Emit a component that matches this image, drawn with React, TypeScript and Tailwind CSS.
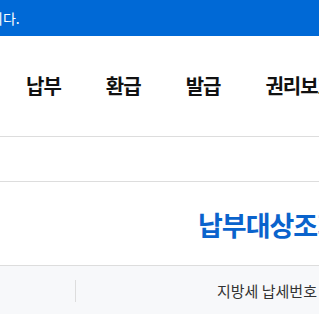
export default function App() {
  const menus = ["납부", "환급", "발급", "권리보호"];

  return (
    <div
      className="w-[319px] h-[314px] overflow-hidden bg-white"
      style={{ fontFamily: '"Noto Sans CJK KR", "Noto Sans", sans-serif' }}
    >
      {/* Notice banner (tail of a longer sentence) */}
      <div className="h-[36px] bg-[#0069d6] flex items-center overflow-hidden">
        <span className="ml-[-10px] text-[14px] text-white leading-none whitespace-nowrap shrink-0">
          니다.
        </span>
      </div>

      {/* Main menu */}
      <div className="h-[101px] border-b border-[#dddddd] flex items-center pl-[26px] gap-[45px] whitespace-nowrap overflow-hidden">
        {menus.map((m) => (
          <span
            key={m}
            className="text-[20px] font-bold tracking-[-1px] text-[#111111] leading-none shrink-0"
          >
            {m}
          </span>
        ))}
      </div>

      {/* Breadcrumb band */}
      <div className="h-[45px] border-b border-[#dddddd]" />

      {/* Page title */}
      <div className="h-[84px] border-b border-[#dddddd] flex items-center pl-[198px] whitespace-nowrap overflow-hidden">
        <h2 className="text-[27px] font-bold tracking-[-1px] text-[#0a63cc] leading-none pt-[2px] shrink-0">
          납부대상조회
        </h2>
      </div>

      {/* Table header */}
      <div className="h-[49px] bg-[#f7f8fa] flex items-center whitespace-nowrap overflow-hidden">
        <div className="w-[76px] h-[22px] border-r border-[#dddddd] shrink-0" />
        <span className="ml-[141px] text-[15px] text-[#333333] leading-none shrink-0">
          지방세 납세번호
        </span>
      </div>
    </div>
  );
}
